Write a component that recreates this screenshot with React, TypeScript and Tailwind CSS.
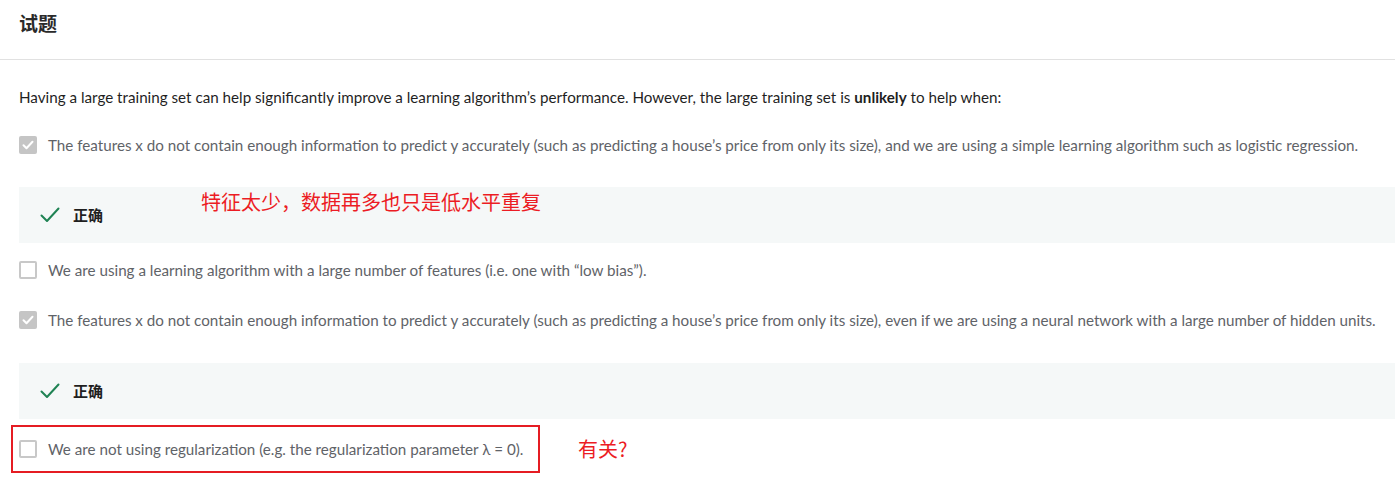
import * as React from "react";

const sans = { fontFamily: "Lato, 'Noto Sans CJK SC', sans-serif" };
const cjk = { fontFamily: "'Noto Sans CJK SC', sans-serif" };

function Checkbox({ checked }: { checked: boolean }) {
  if (checked) {
    return (
      <span className="flex h-[18px] w-[18px] shrink-0 items-center justify-center rounded-[2px] bg-[#c5c5c5]">
        <svg width="14" height="14" viewBox="0 0 14 14" fill="none">
          <path d="M2.5 7.2l3 3 6-6.4" stroke="#fff" strokeWidth="2" strokeLinecap="round" strokeLinejoin="round" />
        </svg>
      </span>
    );
  }
  return <span className="h-[18px] w-[18px] shrink-0 rounded-[2px] border-2 border-[#c8c8c8] bg-white" />;
}

function Option({ checked, children }: { checked: boolean; children: React.ReactNode }) {
  return (
    <div className="flex h-[18px] items-center gap-[11px] text-[15.2px] text-[#5f6368]">
      <Checkbox checked={checked} />
      <span className="whitespace-nowrap">{children}</span>
    </div>
  );
}

function Correct({ note }: { note?: string }) {
  return (
    <div className="flex h-[56px] items-center bg-[#f5f8f8] pl-[21px]">
      <svg width="20" height="18" viewBox="0 0 20 18" fill="none">
        <path d="M1.5 9.5l5.5 5.5L18.5 2.5" stroke="#1f8354" strokeWidth="2" strokeLinecap="round" strokeLinejoin="round" />
      </svg>
      <span className="ml-[13px] text-[15px] font-bold text-[#1f1f1f]" style={cjk}>
        正确
      </span>
      {note && (
        <span className="ml-[98px] -mt-[26px] text-[20px] text-[#ec1c24]" style={cjk}>
          {note}
        </span>
      )}
    </div>
  );
}

export default function App() {
  return (
    <div className="h-[486px] w-[1395px] overflow-hidden bg-white" style={sans}>
      <div className="flex h-[60px] items-center border-b border-[#e1e1e1] px-[19px] pb-[12px]">
        <h2 className="text-[19px] font-bold text-[#2a2a2a]" style={cjk}>
          试题
        </h2>
      </div>
      <div className="pl-[19px]">
        <p className="mt-[27px] text-[15.2px] leading-[21px] text-[#1f1f1f]">
          Having a large training set can help significantly improve a learning algorithm’s performance. However, the large training set is{" "}
          <b>unlikely</b> to help when:
        </p>
        <div className="mt-[28px]">
          <Option checked>
            The features x do not contain enough information to predict y accurately (such as predicting a house’s price from only its size), and we are using a simple learning algorithm such as logistic regression.
          </Option>
        </div>
        <div className="mt-[33px]">
          <Correct note="特征太少，数据再多也只是低水平重复" />
        </div>
        <div className="mt-[18px]">
          <Option checked={false}>We are using a learning algorithm with a large number of features (i.e. one with “low bias”).</Option>
        </div>
        <div className="mt-[32px]">
          <Option checked>
            The features x do not contain enough information to predict y accurately (such as predicting a house’s price from only its size), even if we are using a neural network with a large number of hidden units.
          </Option>
        </div>
        <div className="mt-[34px]">
          <Correct />
        </div>
      </div>
      <div className="mt-[6px] flex items-center pl-[11px]">
        <div className="flex h-[48px] w-[529px] items-center border-2 border-[#e51c23] pl-[6px]">
          <Option checked={false}>We are not using regularization (e.g. the regularization parameter λ = 0).</Option>
        </div>
        <span className="ml-[38px] text-[20px] text-[#ec1c24]" style={cjk}>
          有关?
        </span>
      </div>
    </div>
  );
}
